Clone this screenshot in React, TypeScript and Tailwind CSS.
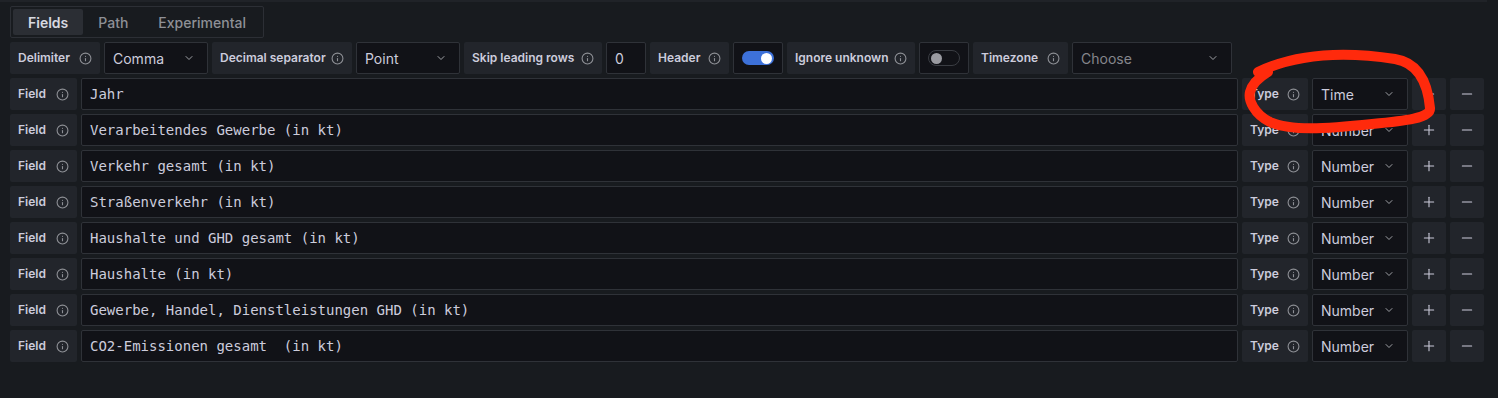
import { ChevronDown, Info, Plus, Minus } from 'lucide-react';

const sans = { fontFamily: 'Inter, "Noto Sans", sans-serif' };
const mono = { fontFamily: '"DejaVu Sans Mono", "Liberation Mono", monospace' };

const fields: { name: string; type: string }[] = [
  { name: 'Jahr', type: 'Time' },
  { name: 'Verarbeitendes Gewerbe (in kt)', type: 'Number' },
  { name: 'Verkehr gesamt (in kt)', type: 'Number' },
  { name: 'Straßenverkehr (in kt)', type: 'Number' },
  { name: 'Haushalte und GHD gesamt (in kt)', type: 'Number' },
  { name: 'Haushalte (in kt)', type: 'Number' },
  { name: 'Gewerbe, Handel, Dienstleistungen GHD (in kt)', type: 'Number' },
  { name: 'CO2-Emissionen gesamt  (in kt)', type: 'Number' },
];

function Label({ text, w }: { text: string; w: string }) {
  return (
    <div
      className={`${w} h-[32px] shrink-0 flex items-center justify-between pl-2 pr-[8px] rounded-[2px] bg-[#22252b] text-[12px] font-semibold text-[#ccccdc]`}
    >
      <span>{text}</span>
      <Info size={13} strokeWidth={2} className="text-[#8e9096]" />
    </div>
  );
}

function Select({ value, w, placeholder }: { value: string; w: string; placeholder?: boolean }) {
  return (
    <div
      className={`${w} h-[32px] shrink-0 flex items-center justify-between pl-[8px] pr-[12px] rounded-[2px] bg-[#111217] border border-[#2f3238] text-[14px] ${
        placeholder ? 'text-[#85868c]' : 'text-[#ccccdc]'
      }`}
    >
      <span>{value}</span>
      <ChevronDown size={12} strokeWidth={2} className="text-[#9fa1a6]" />
    </div>
  );
}

function Toggle({ on }: { on: boolean }) {
  return (
    <div className="w-[50px] h-[32px] shrink-0 flex items-center justify-center rounded-[2px] bg-[#111217] border border-[#2f3238]">
      {on ? (
        <div className="w-[32px] h-[14px] rounded-full bg-[#3d71d9] flex items-center justify-end pr-[2px]">
          <div className="w-[11px] h-[11px] rounded-full bg-white" />
        </div>
      ) : (
        <div className="w-[32px] h-[16px] rounded-full bg-[#111217] border border-[#3a3d43] flex items-center pl-[2px]">
          <div className="w-[11px] h-[11px] rounded-full bg-[#9a9ba1]" />
        </div>
      )}
    </div>
  );
}

export default function App() {
  return (
    <div className="relative w-[1498px] h-[398px] overflow-hidden bg-[#181b1f]" style={sans}>
      <div className="h-[2px] w-[1487px] bg-[#202328]" />

      <div className="pl-[10px] pt-[4px] flex flex-col gap-[4px]">
        {/* tabs */}
        <div className="flex">
          <div className="flex items-center h-[32px] p-[2px] border border-[#2c2f35] rounded-[2px] text-[14px] font-medium">
            <div className="h-full px-[15px] flex items-center rounded-[2px] bg-[#2b2e34] text-[#d8d9e0] font-semibold">Fields</div>
            <div className="h-full px-[15px] flex items-center text-[#8e9096]">Path</div>
            <div className="h-full px-[15px] flex items-center text-[#8e9096]">Experimental</div>
          </div>
        </div>

        {/* options */}
        <div className="flex gap-[4px] h-[32px]">
          <Label text="Delimiter" w="w-[90px]" />
          <Select value="Comma" w="w-[104px]" />
          <Label text="Decimal separator" w="w-[140px]" />
          <Select value="Point" w="w-[104px]" />
          <Label text="Skip leading rows" w="w-[138px]" />
          <div className="w-[40px] h-[32px] shrink-0 flex items-center pl-[8px] rounded-[2px] bg-[#111217] border border-[#2f3238] text-[14px] text-[#ccccdc]">
            0
          </div>
          <Label text="Header" w="w-[79px]" />
          <Toggle on />
          <Label text="Ignore unknown" w="w-[128px]" />
          <Toggle on={false} />
          <Label text="Timezone" w="w-[95px]" />
          <Select value="Choose" w="w-[160px]" placeholder />
        </div>

        {/* fields */}
        {fields.map((f) => (
          <div key={f.name} className="flex gap-[4px] h-[32px] w-[1474px]">
            <Label text="Field" w="w-[67px]" />
            <div
              className="flex-1 h-[32px] flex items-center pl-[8px] rounded-[2px] bg-[#111217] border border-[#2f3238] text-[14px] text-[#ccccdc] whitespace-pre"
              style={mono}
            >
              {f.name}
            </div>
            <Label text="Type" w="w-[66px]" />
            <Select value={f.type} w="w-[96px]" />
            <div className="w-[34px] h-[32px] shrink-0 flex items-center justify-center rounded-[2px] bg-[#22252b] text-[#ccccdc]">
              <Plus size={16} strokeWidth={1.6} />
            </div>
            <div className="w-[34px] h-[32px] shrink-0 flex items-center justify-center rounded-[2px] bg-[#22252b] text-[#ccccdc]">
              <Minus size={16} strokeWidth={1.6} />
            </div>
          </div>
        ))}
      </div>

      {/* red annotation */}
      <svg className="absolute left-0 top-0 pointer-events-none" width="1498" height="398">
        <path
          d="M1258 72 C1300 52 1350 52 1395 59 C1420 63 1428 86 1430 108 C1431 118 1405 121 1372 124 C1325 129 1290 131 1270 122 C1254 114 1248 100 1250 92 C1252 84 1258 78 1268 72"
          fill="none"
          stroke="#ff2a0c"
          strokeWidth="10"
          strokeLinecap="round"
          strokeLinejoin="round"
        />
      </svg>
    </div>
  );
}
